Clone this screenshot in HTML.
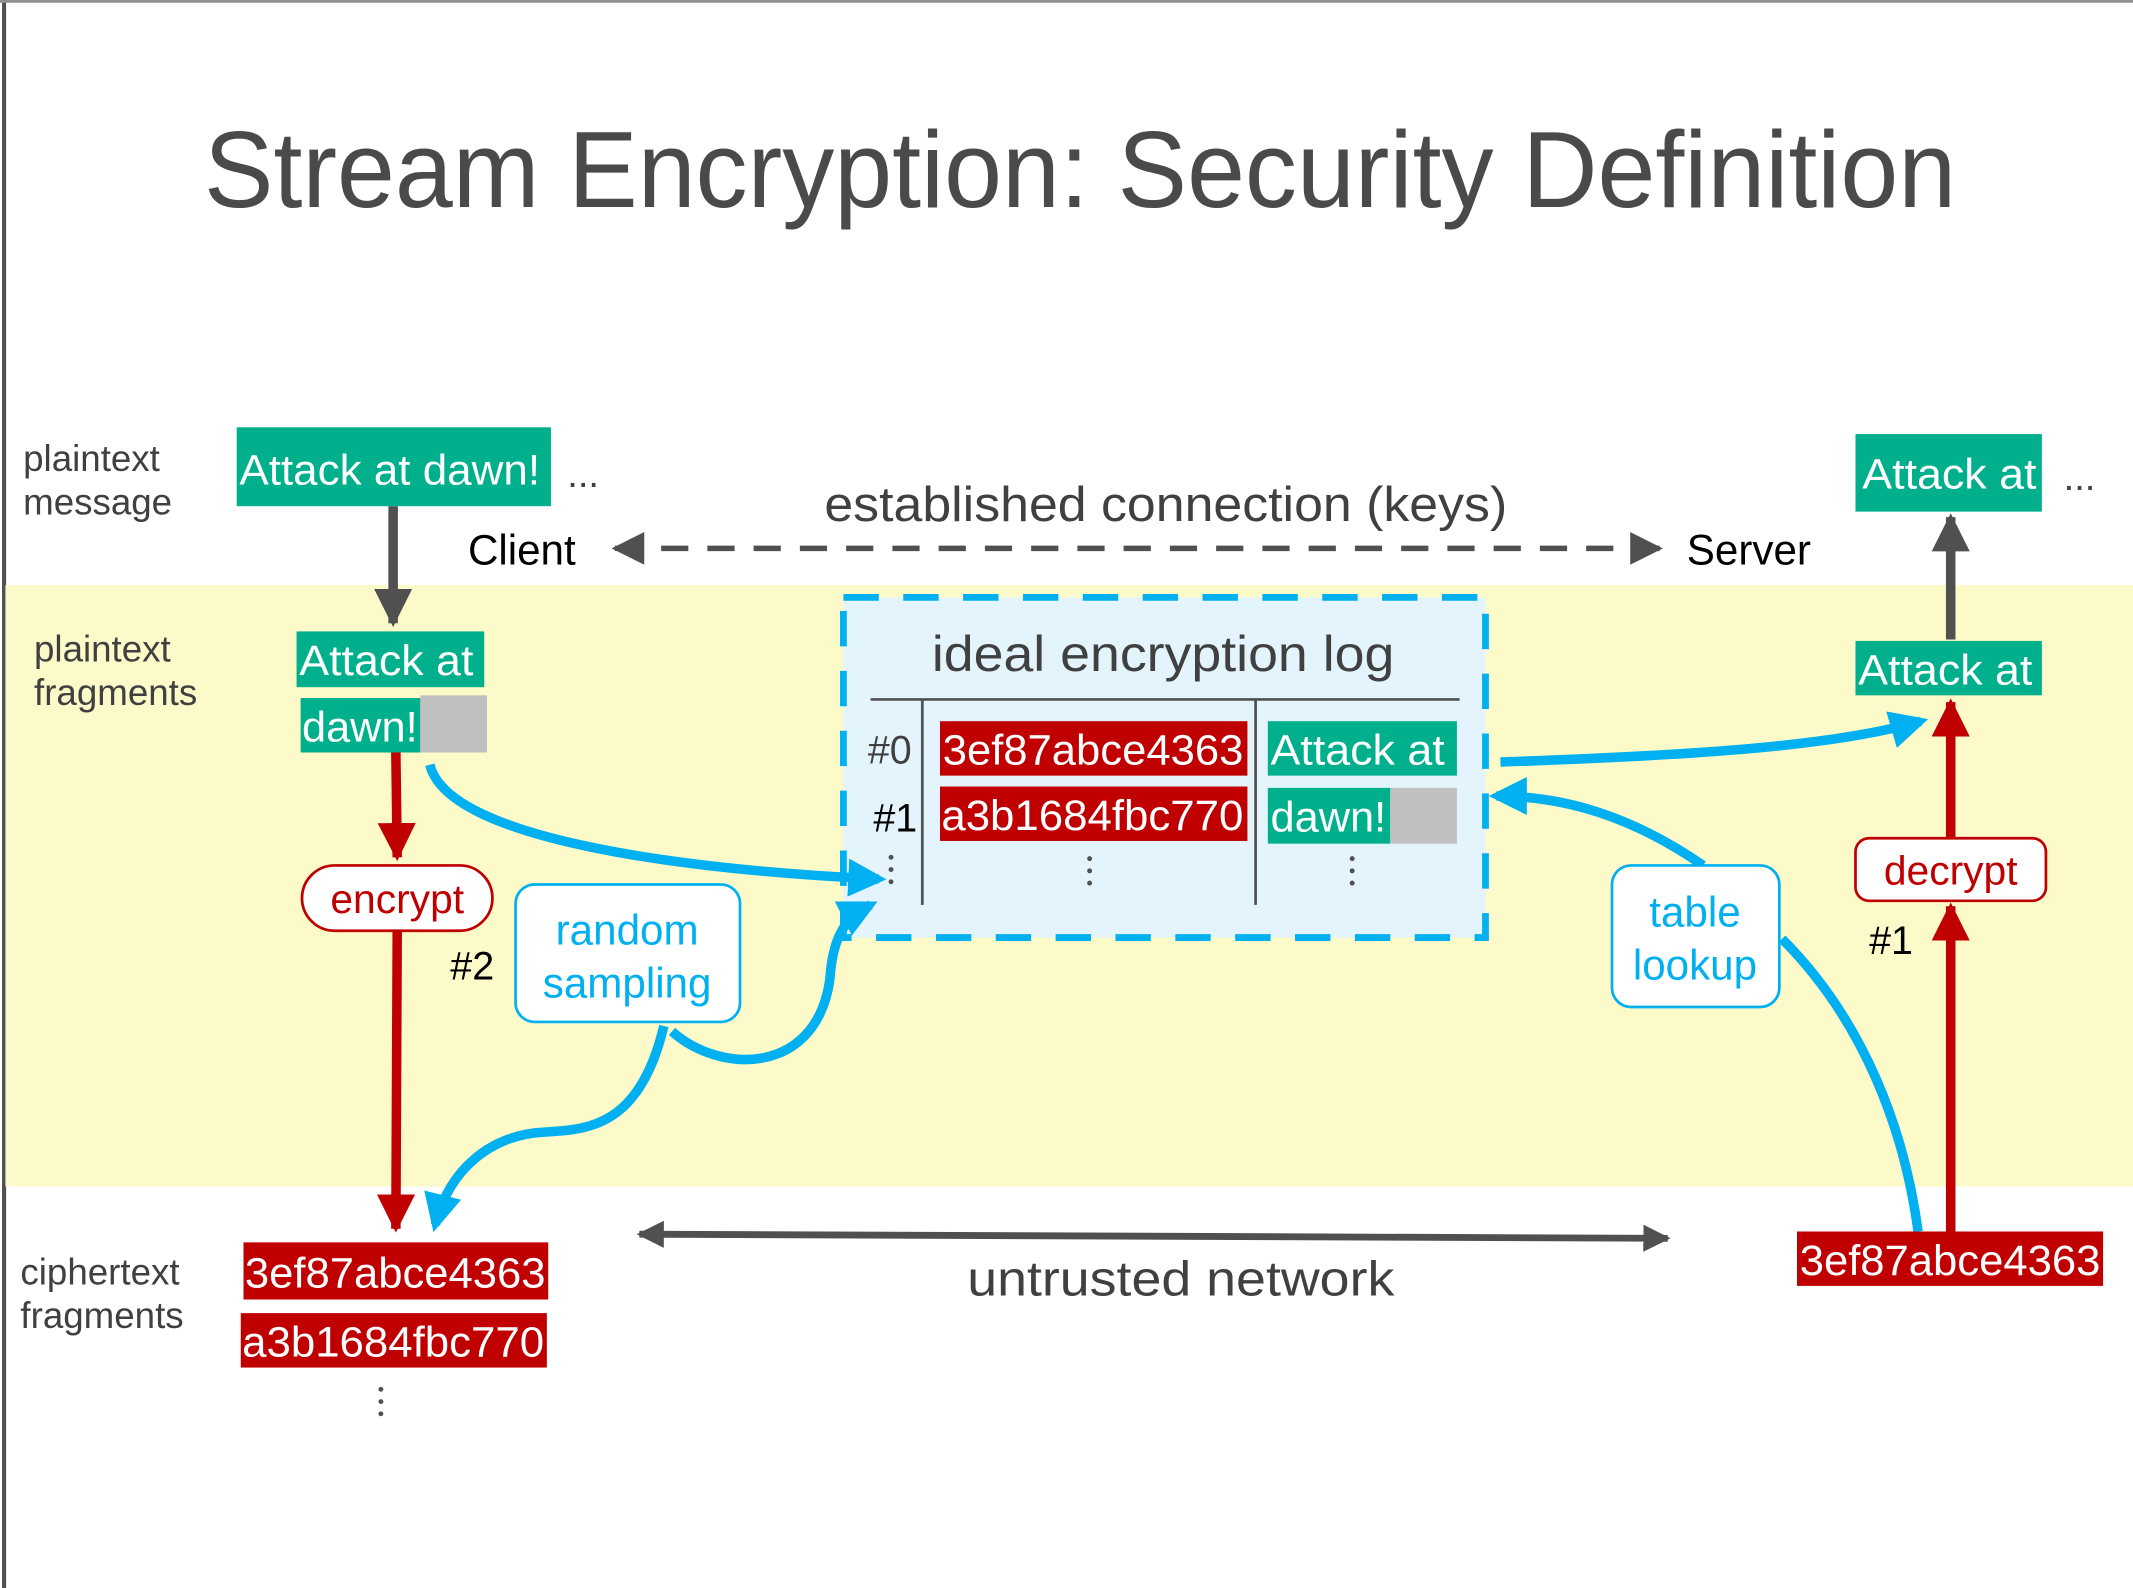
<!DOCTYPE html>
<html><head><meta charset="utf-8"><style>
html,body{margin:0;padding:0;background:#fff;}
svg{display:block;}
text{font-family:"Liberation Sans",sans-serif;}
</style></head><body>
<svg width="2133" height="1588" viewBox="0 0 1568 1167" preserveAspectRatio="none" xmlns="http://www.w3.org/2000/svg">
<defs>
<marker id="ag" viewBox="0 0 10 10" refX="9" refY="5" markerWidth="4" markerHeight="4" orient="auto-start-reverse"><path d="M0,0L10,5L0,10z" fill="#505050"/></marker>
<marker id="ag2" viewBox="0 0 10 10" refX="9" refY="5" markerWidth="6" markerHeight="6" orient="auto-start-reverse"><path d="M0,0L10,5L0,10z" fill="#505050"/></marker>
<marker id="ar" viewBox="0 0 10 10" refX="9" refY="5" markerWidth="4" markerHeight="4" orient="auto-start-reverse"><path d="M0,0L10,5L0,10z" fill="#c00000"/></marker>
<marker id="ab" viewBox="0 0 10 10" refX="8" refY="5" markerWidth="4" markerHeight="4" orient="auto"><path d="M0,0L10,5L0,10z" fill="#00b0f0"/></marker>
</defs>
<rect x="0" y="0" width="1568" height="1167" fill="#fff"/>
<line x1="3" y1="0" x2="3" y2="1167" stroke="#505050" stroke-width="3"/>
<line x1="0" y1="1" x2="1568" y2="1" stroke="#909090" stroke-width="2"/>
<rect x="4" y="430" width="1564" height="442" fill="#fdfac9"/>

<text x="150" y="152" font-size="80" fill="#4a4a4a" textLength="1288" lengthAdjust="spacingAndGlyphs">Stream Encryption: Security Definition</text>

<g font-size="27" fill="#404040">
<text x="17" y="346">plaintext</text><text x="17" y="378">message</text>
<text x="25" y="486">plaintext</text><text x="25" y="518">fragments</text>
<text x="15" y="944">ciphertext</text><text x="15" y="976">fragments</text>
</g>

<rect x="174" y="314" width="231" height="58" fill="#00b08c"/>
<text x="176" y="356" font-size="31" fill="#fff" textLength="221" lengthAdjust="spacingAndGlyphs">Attack at dawn!</text>
<text x="417" y="358" font-size="28" fill="#404040">...</text>
<rect x="1364" y="319" width="137" height="57" fill="#00b08c"/>
<text x="1369" y="359" font-size="31" fill="#fff" textLength="128" lengthAdjust="spacingAndGlyphs">Attack at</text>
<text x="1517" y="360" font-size="28" fill="#404040">...</text>

<line x1="289" y1="372" x2="289" y2="458" stroke="#505050" stroke-width="7" marker-end="url(#ag)"/>
<line x1="1434" y1="470" x2="1434" y2="380" stroke="#505050" stroke-width="7" marker-end="url(#ag)"/>

<text x="857" y="383" font-size="36" fill="#404040" text-anchor="middle" textLength="502" lengthAdjust="spacingAndGlyphs">established connection (keys)</text>
<text x="344" y="415" font-size="31" fill="#000">Client</text>
<text x="1240" y="415" font-size="31" fill="#000">Server</text>
<line x1="452" y1="403" x2="1220" y2="403" stroke="#505050" stroke-width="4" stroke-dasharray="20,14" marker-start="url(#ag2)" marker-end="url(#ag2)"/>

<rect x="218" y="464" width="138" height="41" fill="#00b08c"/>
<text x="220" y="496" font-size="31" fill="#fff" textLength="128" lengthAdjust="spacingAndGlyphs">Attack at</text>
<rect x="221" y="513" width="88" height="40" fill="#00b08c"/>
<text x="222" y="545" font-size="31" fill="#fff" textLength="85" lengthAdjust="spacingAndGlyphs">dawn!</text>
<rect x="309" y="511" width="49" height="42" fill="#c0c0c0"/>

<line x1="291" y1="553" x2="292" y2="630" stroke="#c00000" stroke-width="7" marker-end="url(#ar)"/>
<rect x="222" y="636" width="140" height="48" rx="24" fill="#fff" stroke="#c00000" stroke-width="2"/>
<text x="292" y="671" font-size="30" fill="#c00000" text-anchor="middle">encrypt</text>
<line x1="292" y1="684" x2="291" y2="903" stroke="#c00000" stroke-width="7" marker-end="url(#ar)"/>
<text x="331" y="720" font-size="29" fill="#000">#2</text>

<rect x="379" y="650" width="165" height="101" rx="14" fill="#fff" stroke="#00b0f0" stroke-width="2"/>
<text x="461" y="694" font-size="31" fill="#00b0f0" text-anchor="middle">random</text>
<text x="461" y="733" font-size="31" fill="#00b0f0" text-anchor="middle">sampling</text>

<rect x="620" y="439" width="472" height="250" fill="#e3f4fc" stroke="#00b0f0" stroke-width="5" stroke-dasharray="26,18"/>
<text x="855" y="493" font-size="37" fill="#404040" text-anchor="middle" textLength="340" lengthAdjust="spacingAndGlyphs">ideal encryption log</text>
<line x1="640" y1="514" x2="1073" y2="514" stroke="#505050" stroke-width="2"/>
<line x1="678" y1="514" x2="678" y2="665" stroke="#505050" stroke-width="2"/>
<line x1="923" y1="514" x2="923" y2="665" stroke="#505050" stroke-width="2"/>
<text x="638" y="561" font-size="29" fill="#404040">#0</text>
<text x="642" y="611" font-size="29" fill="#000">#1</text>
<rect x="691" y="530" width="226" height="40" fill="#c00000"/>
<text x="693" y="562" font-size="31" fill="#fff" textLength="221" lengthAdjust="spacingAndGlyphs">3ef87abce4363</text>
<rect x="691" y="578" width="226" height="40" fill="#c00000"/>
<text x="692" y="610" font-size="31" fill="#fff" textLength="222" lengthAdjust="spacingAndGlyphs">a3b1684fbc770</text>
<rect x="932" y="530" width="139" height="40" fill="#00b08c"/>
<text x="934" y="562" font-size="31" fill="#fff" textLength="128" lengthAdjust="spacingAndGlyphs">Attack at</text>
<rect x="932" y="579" width="90" height="41" fill="#00b08c"/>
<text x="934" y="611" font-size="31" fill="#fff" textLength="85" lengthAdjust="spacingAndGlyphs">dawn!</text>
<rect x="1022" y="579" width="49" height="41" fill="#c0c0c0"/>
<g fill="#505050">
<circle cx="655" cy="630" r="1.8"/><circle cx="655" cy="639" r="1.8"/><circle cx="655" cy="648" r="1.8"/>
<circle cx="801" cy="631" r="1.8"/><circle cx="801" cy="640" r="1.8"/><circle cx="801" cy="649" r="1.8"/>
<circle cx="994" cy="631" r="1.8"/><circle cx="994" cy="640" r="1.8"/><circle cx="994" cy="649" r="1.8"/>
<circle cx="280" cy="1021" r="1.8"/><circle cx="280" cy="1030" r="1.8"/><circle cx="280" cy="1039" r="1.8"/>
</g>

<g fill="none" stroke="#00b0f0" stroke-width="7">
<path d="M316,562 C330,620 520,640 646,646" marker-end="url(#ab)"/>
<path d="M488,754 C470,830 430,830 400,832 C360,834 330,860 320,900" marker-end="url(#ab)"/>
<path d="M494,758 C530,790 600,790 610,720 C612,690 620,675 640,665" marker-end="url(#ab)"/>
<path d="M1103,560 C1250,555 1350,548 1412,530" marker-end="url(#ab)"/>
<path d="M1252,636 C1200,600 1150,585 1100,585" marker-end="url(#ab)"/>
<path d="M1310,690 C1370,750 1400,830 1410,905"/>
</g>

<rect x="1185" y="636" width="123" height="104" rx="14" fill="#fff" stroke="#00b0f0" stroke-width="2"/>
<text x="1246" y="681" font-size="31" fill="#00b0f0" text-anchor="middle">table</text>
<text x="1246" y="720" font-size="31" fill="#00b0f0" text-anchor="middle">lookup</text>

<rect x="1364" y="471" width="137" height="40" fill="#00b08c"/>
<text x="1366" y="503" font-size="31" fill="#fff" textLength="128" lengthAdjust="spacingAndGlyphs">Attack at</text>
<line x1="1434" y1="616" x2="1434" y2="516" stroke="#c00000" stroke-width="7" marker-end="url(#ar)"/>
<rect x="1364" y="616" width="140" height="46" rx="10" fill="#fff" stroke="#c00000" stroke-width="2"/>
<text x="1434" y="650" font-size="30" fill="#c00000" text-anchor="middle">decrypt</text>
<text x="1374" y="701" font-size="29" fill="#000">#1</text>
<line x1="1434" y1="905" x2="1434" y2="666" stroke="#c00000" stroke-width="7" marker-end="url(#ar)"/>
<rect x="1321" y="905" width="225" height="40" fill="#c00000"/>
<text x="1323" y="937" font-size="31" fill="#fff" textLength="221" lengthAdjust="spacingAndGlyphs">3ef87abce4363</text>

<rect x="179" y="913" width="224" height="42" fill="#c00000"/>
<text x="180" y="946" font-size="31" fill="#fff" textLength="221" lengthAdjust="spacingAndGlyphs">3ef87abce4363</text>
<rect x="177" y="965" width="225" height="40" fill="#c00000"/>
<text x="178" y="997" font-size="31" fill="#fff" textLength="222" lengthAdjust="spacingAndGlyphs">a3b1684fbc770</text>
<line x1="470" y1="907" x2="1226" y2="910" stroke="#505050" stroke-width="5" marker-start="url(#ag)" marker-end="url(#ag)"/>
<text x="868" y="952" font-size="36" fill="#404040" text-anchor="middle" textLength="314" lengthAdjust="spacingAndGlyphs">untrusted network</text>
</svg>
</body></html>
